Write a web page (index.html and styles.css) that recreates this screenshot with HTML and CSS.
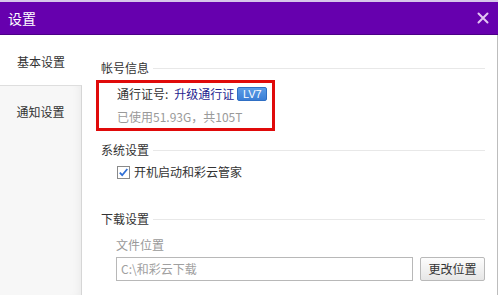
FILE: index.html
```html
<!DOCTYPE html>
<html lang="zh">
<head>
<meta charset="utf-8">
<link rel="stylesheet" href="styles.css">
</head>
<body>
<div class="window">
  <div class="titlebar">
    <span class="title">设置</span>
    <svg class="close" width="12" height="12" viewBox="0 0 12 12"><path d="M1.5 1.5L10.5 10.5M10.5 1.5L1.5 10.5" stroke="#e3c6f3" stroke-width="2" stroke-linecap="round"/></svg>
  </div>
  <div class="main">
    <div class="sidebar">
      <div class="tab tab-active">基本设置</div>
      <div class="tab-rest"><div class="tab">通知设置</div></div>
    </div>
    <div class="content">
      <div class="heading">帐号信息</div>
      <div class="account">
        <div class="row">
          <span class="label">通行证号:</span>
          <span class="link">升级通行证</span>
          <span class="badge">LV7</span>
        </div>
        <div class="row usage">已使用51.93G，共105T</div>
      </div>
      <div class="heading heading-sys">系统设置</div>
      <label class="check-row">
        <svg class="checkbox" width="13" height="13" viewBox="0 0 13 13"><rect x="0.5" y="0.5" width="12" height="12" fill="#fff" stroke="#8a8a8a"/><path d="M2.8 6.6L5.2 9.2L10.3 3" fill="none" stroke="#2f6fd6" stroke-width="1.8"/></svg>
        <span>开机启动和彩云管家</span>
      </label>
      <div class="heading heading-dl">下载设置</div>
      <div class="field-label">文件位置</div>
      <div class="path-row">
        <div class="path-input">C:\和彩云下载</div>
        <button class="btn">更改位置</button>
      </div>
    </div>
  </div>
</div>
</body>
</html>
```

FILE: styles.css
```css
* { box-sizing: border-box; }
html, body { margin: 0; padding: 0; background: #fff; }
body {
  font-family: "Noto Sans CJK SC", "Noto Sans", sans-serif;
  font-size: 12px;
  color: #333;
  overflow: hidden;
}
.window {
  width: 498px;
  height: 295px;
  border-right: 1px solid #bdbdbd;
  display: flex;
  flex-direction: column;
}
.titlebar {
  height: 35px;
  flex: none;
  background: #6600ae;
  border-top: 2px solid #d7c6ea;
  border-bottom: 1px solid #4c0086;
  display: flex;
  align-items: center;
  justify-content: space-between;
  padding: 0 8px 0 8px;
  margin-right: -1px;
}
.title {
  color: #fff;
  font-size: 14px;
  line-height: 16px;
}
.close { display: block; margin-right: 1px; }
.main {
  flex: 1;
  display: flex;
}
.sidebar {
  width: 82px;
  flex: none;
  display: flex;
  flex-direction: column;
}
.tab {
  height: 50px;
  padding-top: 19px;
  line-height: 16px;
  text-align: center;
  color: #333;
}
.tab-active { background: #fff; }
.tab-rest {
  flex: 1;
  background: #f7f7f7;
  border-top: 1px solid #dedede;
  border-right: 1px solid #d6d6d6;
  box-shadow: inset -8px 0 8px -6px rgba(0,0,0,0.05);
}
.tab-rest .tab { padding-top: 18px; }
.content {
  flex: 1;
  padding: 25px 12px 0 19px;
}
.heading {
  display: flex;
  align-items: center;
  line-height: 16px;
  color: #333;
}
.heading::after {
  content: "";
  flex: 1;
  height: 1px;
  background: #e8e8e8;
  margin-left: 4px;
}
.account {
  margin: 4px 0 0 -5px;
  width: 179px;
  border: 3px solid #e00a0a;
  padding: 3px 0 3px 18px;
}
.row {
  display: flex;
  align-items: center;
  line-height: 16px;
  height: 16px;
  white-space: nowrap;
}
.row > span { flex: none; }
.label { color: #333; }
.link { color: #1f2590; margin-left: 6px; }
.badge {
  margin-left: 3px;
  width: 30px;
  height: 14px;
  background: linear-gradient(#5b9de6, #3b7fd6);
  border: 1px solid #2f6fc4;
  border-radius: 2px;
  color: #fff;
  font-family: "Liberation Sans", sans-serif;
  font-size: 11px;
  line-height: 12px;
  text-align: center;
}
.usage { color: #9a9a9a; margin-top: 7px; }
.heading-sys { margin-top: 11px; }
.check-row {
  display: flex;
  align-items: center;
  margin: 6px 0 0 16px;
  line-height: 16px;
  height: 16px;
}
.checkbox { display: block; margin-right: 4px; }
.heading-dl { margin-top: 31px; }
.field-label {
  margin: 10px 0 0 15px;
  line-height: 16px;
  color: #999;
}
.path-row {
  display: flex;
  margin: 4px 0 0 15px;
  gap: 7px;
}
.path-input {
  width: 297px;
  height: 24px;
  border: 1px solid #b8b8b8;
  line-height: 22px;
  padding-left: 4px;
  color: #a0a0a0;
  background: #fff;
}
.btn {
  width: 65px;
  height: 24px;
  padding: 0;
  border: 1px solid #b9b9b9;
  border-radius: 2px;
  background: linear-gradient(#fdfdfd, #e6e6e6);
  font-family: "Noto Sans CJK SC", sans-serif;
  font-size: 12px;
  color: #333;
  line-height: 22px;
}
```
